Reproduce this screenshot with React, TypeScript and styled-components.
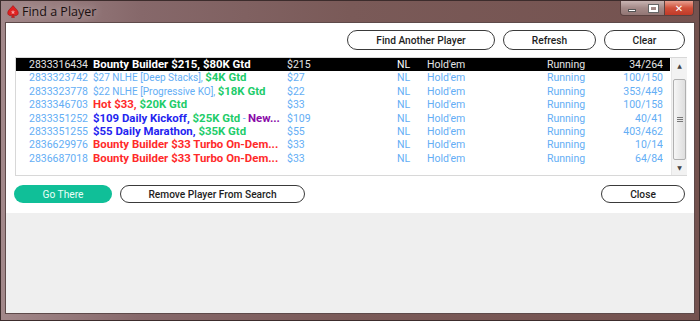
import React from "react";
import styled, { createGlobalStyle } from "styled-components";

const GlobalStyle = createGlobalStyle`
  html, body {
    margin: 0;
    padding: 0;
    width: 700px;
    height: 321px;
    overflow: hidden;
  }
  * {
    box-sizing: border-box;
  }
`;

const LIGHT = "#64aef5";
const GREEN = "#22cc6a";
const RED = "#ff2a2a";
const BLUE = "#2424f0";
const PURPLE = "#8a0aa8";

const Window = styled.div`
  width: 700px;
  height: 321px;
  display: flex;
  flex-direction: column;
  background: linear-gradient(90deg, #a2888a 0%, #86686a 20%, #7a5a58 50%, #74524f 100%);
  border: 1px solid #3c2c2c;
  font-family: Roboto, "Liberation Sans", sans-serif;
`;

const TitleBar = styled.div`
  height: 21px;
  display: flex;
  align-items: flex-start;
  padding-left: 6px;
`;

const TitleText = styled.span`
  font-family: "Open Sans", "Noto Sans", sans-serif;
  font-size: 12.5px;
  color: #1a1010;
  margin-top: 2px;
  margin-left: 3px;
  text-shadow: 0 0 8px rgba(255, 255, 255, 0.6);
`;

const Spade = styled.svg`
  margin-top: 4px;
  width: 12px;
  height: 13px;
`;

const Controls = styled.div`
  margin-left: auto;
  margin-right: 5px;
  display: flex;
  height: 15px;
  border-radius: 0 0 4px 4px;
  overflow: hidden;
  border: 1px solid #5a4240;
  border-top: none;
`;

const CtrlButton = styled.div<{ $close?: boolean; $w: number }>`
  width: ${(p) => p.$w}px;
  height: 100%;
  display: flex;
  align-items: center;
  justify-content: center;
  border-left: ${(p) => (p.$close ? "1px solid #5a4240" : "none")};
  background: ${(p) =>
    p.$close
      ? "linear-gradient(180deg, #e8a090 0%, #d0503a 50%, #c03a28 100%)"
      : "linear-gradient(180deg, #c8b4b2 0%, #a48a88 50%, #927674 100%)"};
  color: #fff;
  font-size: 10px;
  font-weight: bold;
  font-family: "DejaVu Sans", sans-serif;
`;

const MinGlyph = styled.div`
  width: 8px;
  height: 3px;
  background: #fff;
  border: 1px solid #555;
  margin-top: 5px;
`;

const MaxGlyph = styled.div`
  width: 9px;
  height: 7px;
  border: 2px solid #fff;
  outline: 1px solid #666;
`;

const Client = styled.div`
  flex: 1;
  margin: 0 4px 6px 4px;
  display: flex;
  flex-direction: column;
  border: 1px solid #5e4a4a;
  background: #efefef;
`;

const Panel = styled.div`
  height: 190px;
  background: #fff;
  display: flex;
  flex-direction: column;
  padding: 7px 9px 0 8px;
`;

const ButtonRow = styled.div<{ $end?: boolean }>`
  display: flex;
  gap: 8px;
  justify-content: ${(p) => (p.$end ? "flex-end" : "flex-start")};
  align-items: center;
`;

const PillButton = styled.button<{ $w: number; $h?: number; $primary?: boolean }>`
  width: ${(p) => p.$w}px;
  height: ${(p) => p.$h ?? 20}px;
  border-radius: 10px;
  border: ${(p) => (p.$primary ? "none" : "1px solid #3a3a3a")};
  background: ${(p) => (p.$primary ? "#10bf98" : "#fff")};
  color: ${(p) => (p.$primary ? "#eafff8" : "#1e1e1e")};
  font-family: Roboto, "Liberation Sans", sans-serif;
  font-size: 10.2px;
  font-weight: ${(p) => (p.$primary ? 400 : 500)};
  padding: 0;
  cursor: pointer;
`;

const Spacer = styled.div`
  flex: 1;
`;

const List = styled.div`
  margin: 7px -2px 0 1px;
  height: 119px;
  border: 1px solid #d8d8d8;
  border-right: none;
  display: flex;
`;

const Rows = styled.div`
  flex: 1;
  overflow: hidden;
`;

const Row = styled.div<{ $selected?: boolean }>`
  display: grid;
  grid-template-columns: 72px 199px 110px 30px 120px 70px 1fr;
  height: 13.4px;
  line-height: 13.4px;
  font-size: 10.5px;
  padding-right: 7px;
  white-space: nowrap;
  background: ${(p) => (p.$selected ? "#000" : "transparent")};
  color: ${(p) => (p.$selected ? "#e4e4e4" : LIGHT)};
`;

const Cell = styled.div<{ $right?: boolean; $pad?: number; $strong?: boolean }>`
  overflow: hidden;
  text-align: ${(p) => (p.$right ? "right" : "left")};
  padding-left: ${(p) => p.$pad ?? 0}px;
  ${(p) => (p.$strong ? "color: #fff;" : "")}
`;

const Seg = styled.span<{ $c: string; $b?: boolean }>`
  color: ${(p) => p.$c};
  font-weight: ${(p) => (p.$b ? 700 : 400)};
  font-size: ${(p) => (p.$b ? "11.4px" : "10px")};
`;

const ScrollBar = styled.div`
  width: 16px;
  margin-left: 1px;
  display: flex;
  flex-direction: column;
  background: #f2f2f2;
  border-left: 1px solid #e6e6e6;
`;

const Arrow = styled.div`
  height: 15px;
  display: flex;
  align-items: center;
  justify-content: center;
  font-size: 6px;
  color: #444;
  font-family: "DejaVu Sans", sans-serif;
`;

const Thumb = styled.div`
  margin: 6px 1px 0 1px;
  height: 82px;
  border: 1px solid #b0b0b0;
  border-radius: 2px;
  background: linear-gradient(90deg, #f6f6f6, #dedede);
  display: flex;
  flex-direction: column;
  justify-content: center;
  align-items: center;
  gap: 1px;
`;

const Grip = styled.div`
  width: 6px;
  height: 1px;
  background: #777;
`;

const BottomRow = styled(ButtonRow)`
  margin-top: 9px;
`;

type Part = { t: string; c: string; b?: boolean };

interface Entry {
  id: string;
  name: Part[];
  buyIn: string;
  players: string;
}

const entries: Entry[] = [
  { id: "2833316434", name: [{ t: "Bounty Builder $215, $80K Gtd", c: "#fff", b: true }], buyIn: "$215", players: "34/264" },
  {
    id: "2833323742",
    name: [
      { t: "$27 NLHE [Deep Stacks], ", c: LIGHT },
      { t: "$4K Gtd", c: GREEN, b: true },
    ],
    buyIn: "$27",
    players: "100/150",
  },
  {
    id: "2833323778",
    name: [
      { t: "$22 NLHE [Progressive KO], ", c: LIGHT },
      { t: "$18K Gtd", c: GREEN, b: true },
    ],
    buyIn: "$22",
    players: "353/449",
  },
  {
    id: "2833346703",
    name: [
      { t: "Hot $33, ", c: RED, b: true },
      { t: "$20K Gtd", c: GREEN, b: true },
    ],
    buyIn: "$33",
    players: "100/158",
  },
  {
    id: "2833351252",
    name: [
      { t: "$109 Daily Kickoff, ", c: BLUE, b: true },
      { t: "$25K Gtd", c: GREEN, b: true },
      { t: " - ", c: LIGHT },
      { t: "New...", c: PURPLE, b: true },
    ],
    buyIn: "$109",
    players: "40/41",
  },
  {
    id: "2833351255",
    name: [
      { t: "$55 Daily Marathon, ", c: BLUE, b: true },
      { t: "$35K Gtd", c: GREEN, b: true },
    ],
    buyIn: "$55",
    players: "403/462",
  },
  { id: "2836629976", name: [{ t: "Bounty Builder $33 Turbo On-Dem...", c: RED, b: true }], buyIn: "$33", players: "10/14" },
  { id: "2836687018", name: [{ t: "Bounty Builder $33 Turbo On-Dem...", c: RED, b: true }], buyIn: "$33", players: "64/84" },
];

const App: React.FC = () => {
  return (
    <>
      <GlobalStyle />
      <Window>
        <TitleBar>
          <Spade viewBox="0 0 20 22">
            <path
              d="M10 1 C6 6 1 9 1 13.5 C1 16.5 3.5 18 6 18 C7.5 18 8.5 17.3 9 16.5 L7.5 21 L12.5 21 L11 16.5 C11.5 17.3 12.5 18 14 18 C16.5 18 19 16.5 19 13.5 C19 9 14 6 10 1 Z"
              fill="#e02020"
              stroke="#8a0c0c"
              strokeWidth="0.8"
            />
            <path d="M10 8 L11 11 L14 11 L11.6 12.8 L12.5 15.8 L10 14 L7.5 15.8 L8.4 12.8 L6 11 L9 11 Z" fill="#ffd8d8" opacity="0.7" />
          </Spade>
          <TitleText>Find a Player</TitleText>
          <Controls>
            <CtrlButton $w={22}>
              <MinGlyph />
            </CtrlButton>
            <CtrlButton $w={21}>
              <MaxGlyph />
            </CtrlButton>
            <CtrlButton $w={29} $close>
              ✕
            </CtrlButton>
          </Controls>
        </TitleBar>
        <Client>
          <Panel>
            <ButtonRow $end>
              <PillButton $w={148}>Find Another Player</PillButton>
              <PillButton $w={93}>Refresh</PillButton>
              <PillButton $w={81}>Clear</PillButton>
            </ButtonRow>
            <List>
              <Rows>
                {entries.map((e, i) => {
                  const sel = i === 0;
                  return (
                    <Row key={e.id} $selected={sel}>
                      <Cell $right>{e.id}</Cell>
                      <Cell $pad={5}>
                        {e.name.map((p, j) => (
                          <Seg key={j} $c={p.c} $b={p.b}>
                            {p.t}
                          </Seg>
                        ))}
                      </Cell>
                      <Cell>{e.buyIn}</Cell>
                      <Cell $strong={sel}>NL</Cell>
                      <Cell>Hold'em</Cell>
                      <Cell>Running</Cell>
                      <Cell $right>{e.players}</Cell>
                    </Row>
                  );
                })}
              </Rows>
              <ScrollBar>
                <Arrow>▲</Arrow>
                <Thumb>
                  <Grip />
                  <Grip />
                  <Grip />
                </Thumb>
                <Spacer />
                <Arrow>▼</Arrow>
              </ScrollBar>
            </List>
            <BottomRow>
              <PillButton $w={98} $h={18} $primary>
                Go There
              </PillButton>
              <PillButton $w={185} $h={18}>
                Remove Player From Search
              </PillButton>
              <Spacer />
              <PillButton $w={84} $h={18}>
                Close
              </PillButton>
            </BottomRow>
          </Panel>
        </Client>
      </Window>
    </>
  );
};

export default App;
